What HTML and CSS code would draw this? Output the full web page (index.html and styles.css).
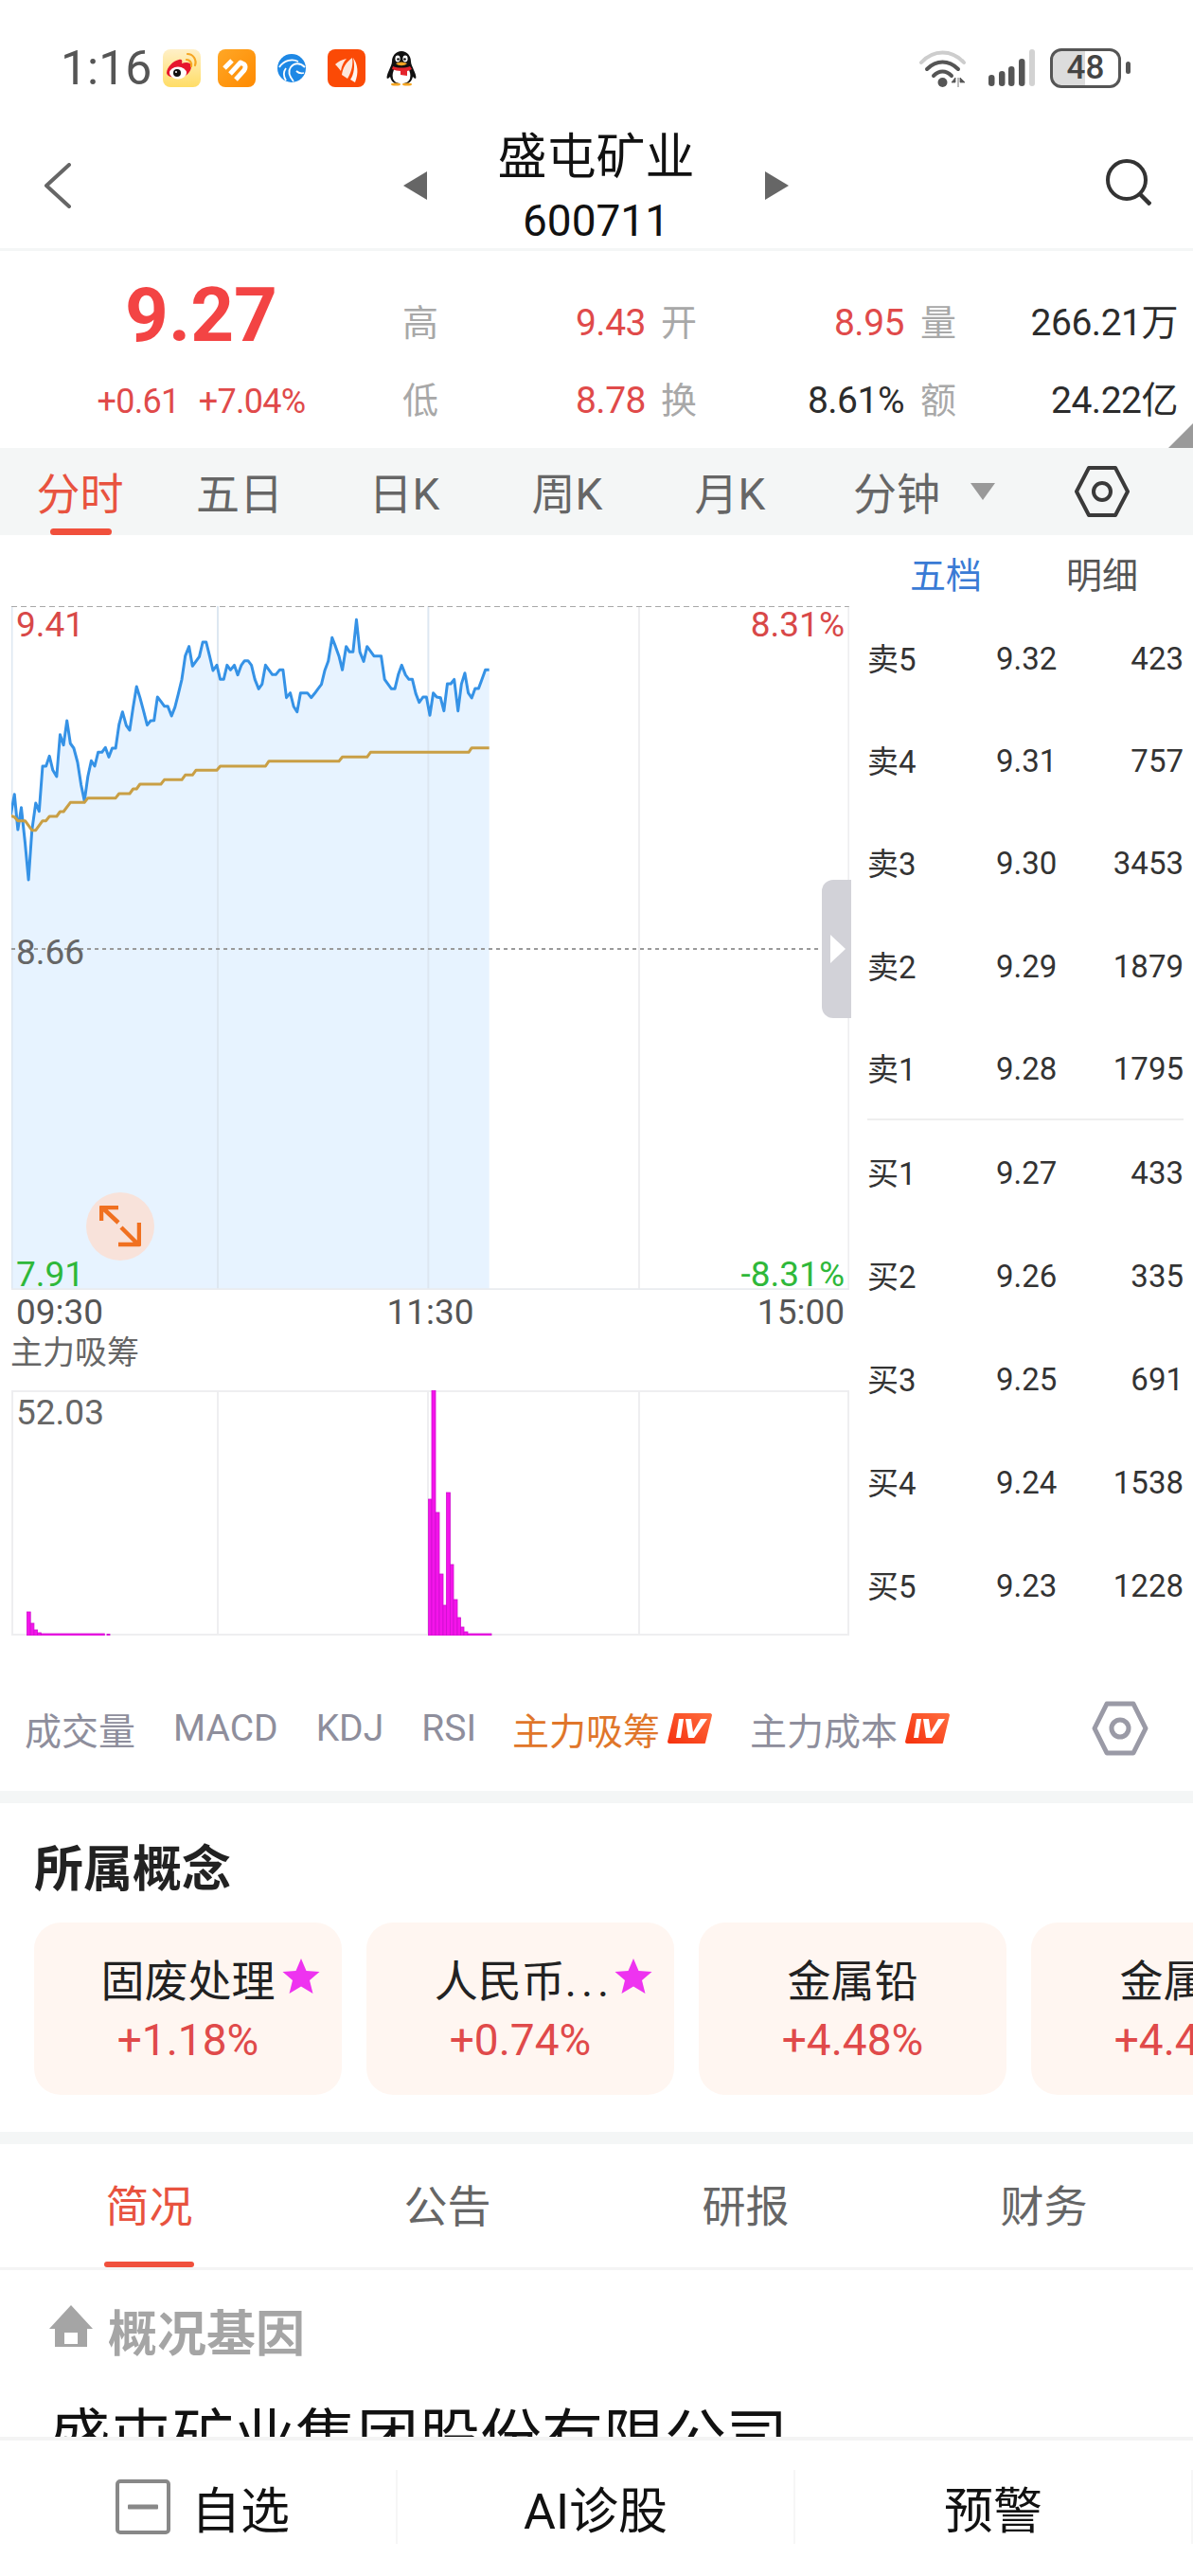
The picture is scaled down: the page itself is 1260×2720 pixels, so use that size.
FILE: index.html
```html
<!DOCTYPE html>
<html lang="zh-CN">
<head>
<meta charset="utf-8">
<title>盛屯矿业 600711</title>
<link rel="stylesheet" href="styles.css">
</head>
<body>
<div class="page">
  <div class="scroll">
    <div class="status">
      <span class="time">1:16</span>
      <div class="apps">
        <svg class="app" viewBox="0 0 40 40"><defs><linearGradient id="wb" x1="0" y1="0" x2="0" y2="1"><stop offset="0" stop-color="#fff0c8"/><stop offset="1" stop-color="#ffdd66"/></linearGradient></defs><rect width="40" height="40" rx="8" fill="url(#wb)"/><path d="M4 25c0-6 7-13 13-14 3-1 4 1 3 4 5-2 10-1 10 3 0 7-7 12-14 12-7 0-12-2-12-5z" fill="#e6162d"/><ellipse cx="16" cy="25" rx="9" ry="6.5" fill="#fff"/><circle cx="15" cy="25" r="4" fill="#111"/><circle cx="14" cy="24" r="1" fill="#fff"/><path d="M25 11c3 0 6 3 5 7M26 5c6 0 10 6 8 12" fill="none" stroke="#f6a623" stroke-width="2.2" stroke-linecap="round"/></svg>
        <svg class="app" viewBox="0 0 40 40"><defs><linearGradient id="hb" x1="0" y1="0" x2="1" y2="1"><stop offset="0" stop-color="#ffa726"/><stop offset="1" stop-color="#ff8a00"/></linearGradient></defs><rect width="40" height="40" rx="8" fill="url(#hb)"/><path d="M7 20l8-8M13 26l11-12 4 2c2 2 1 4 0 6l-9 10" fill="none" stroke="#fff" stroke-width="5" stroke-linejoin="round"/></svg>
        <svg class="app" viewBox="0 0 40 40"><circle cx="20" cy="20" r="15" fill="#1e88e5"/><path d="M7 19c5-8 14-9 20-6M34 19c-5-5-11-5-15 0-3 4-1 10 3 15M14 33c-3-5-3-9 0-13M33 25c-4 1-6 0-8-2" fill="none" stroke="#fff" stroke-width="1.8"/></svg>
        <svg class="app" viewBox="0 0 40 40"><rect width="40" height="40" rx="8" fill="#fb4a06"/><path d="M8 16c3-3 7-5 12-6-3 3-5 7-6 13-2-3-4-5-6-7z" fill="#fde7dc"/><path d="M15 27c1-7 4-13 11-18 1 6 0 14-5 22-2-1-4-3-6-4z" fill="#fde7dc"/><path d="M24 32c4-6 5-14 3-23 5 7 6 16 2 26-2-1-3-2-5-3z" fill="#fff5ef"/></svg>
        <svg class="app" viewBox="0 0 40 40"><path d="M20 2c6 0 10 5 10 11 0 3 2 6 3 9 2 4 3 8 2 9-1 0-2-1-3-2-1 4-3 6-5 7H13c-2-1-4-3-5-7-1 1-2 2-3 2-1-1 0-5 2-9 1-3 3-6 3-9C10 7 14 2 20 2z" fill="#111"/><path d="M13 20h14c2 3 3 7 2 11-1 3-4 5-9 5s-8-2-9-5c-1-4 0-8 2-11z" fill="#fff"/><path d="M11 18c5 2 13 2 18 0l2 3c-2 1-4 2-5 2v5l-7-1v-4c-3 0-6-1-9-2z" fill="#e4242c"/><ellipse cx="16" cy="10" rx="2.6" ry="3.4" fill="#fff"/><ellipse cx="24" cy="10" rx="2.6" ry="3.4" fill="#fff"/><circle cx="16.5" cy="10.5" r="1.3" fill="#111"/><circle cx="23.5" cy="10.5" r="1.3" fill="#111"/><path d="M14 15c4-2 8-2 12 0-3 3-9 3-12 0z" fill="#f5a623"/><ellipse cx="14" cy="37" rx="5" ry="1.5" fill="#f5a623"/><ellipse cx="26" cy="37" rx="5" ry="1.5" fill="#f5a623"/></svg>
      </div>
      <div class="sys">
        <svg class="wifi" viewBox="0 0 49 40"><path d="M2 14c13-14 32-14 45 0" fill="none" stroke="#cdcdcd" stroke-width="4" stroke-linecap="round"/><path d="M8 21c10-10 23-10 33 0M15 28c6-6 13-6 19 0" fill="none" stroke="#555" stroke-width="4" stroke-linecap="round"/><circle cx="24.500" cy="35" r="5" fill="#555"/><path d="M38 35l-4 0 4-5zM41 30v10M43 30l5 5-5 0z" fill="#555" stroke="#555" stroke-width=".8"/></svg>
        <svg class="signal" viewBox="0 0 49 40"><rect x="0" y="27" width="6.500" height="12" rx="3.200" fill="#555"/><rect x="11" y="23" width="6.500" height="16" rx="3.200" fill="#555"/><rect x="21" y="18" width="6.500" height="21" rx="3.200" fill="#555"/><rect x="32" y="10" width="6.500" height="29" rx="3.200" fill="#555"/><rect x="43" y="0" width="6" height="39" rx="3" fill="#d2d2d2"/></svg>
        <div class="battery">48</div>
      </div>
    </div>

    <header class="header">
      <svg class="back" viewBox="0 0 30 48"><path d="M27 2L3 24l24 22" fill="none" stroke="#666" stroke-width="4" stroke-linecap="round" stroke-linejoin="round"/></svg>
      <svg class="tri" viewBox="0 0 25 30"><path d="M25 0v30L0 15z" fill="#666"/></svg>
      <div class="title">
        <div class="name">盛屯矿业</div>
        <div class="code">600711</div>
      </div>
      <svg class="tri" viewBox="0 0 25 30"><path d="M0 0v30l25-15z" fill="#666"/></svg>
      <svg class="search" viewBox="0 0 48 50"><circle cx="22" cy="23" r="20" fill="none" stroke="#333" stroke-width="4"/><path d="M36 38l11 11" stroke="#333" stroke-width="4.500"/></svg>
    </header>

    <section class="quote">
      <div class="price-block">
        <div class="price">9.27</div>
        <div class="change"><span>+0.61</span><span>+7.04%</span></div>
      </div>
      <div class="stats">
        <span class="lab">高</span><span class="val up">9.43</span>
        <span class="lab">开</span><span class="val up">8.95</span>
        <span class="lab">量</span><span class="val">266.21万</span>
        <span class="lab">低</span><span class="val up">8.78</span>
        <span class="lab">换</span><span class="val">8.61%</span>
        <span class="lab">额</span><span class="val">24.22亿</span>
      </div>
      <div class="corner"></div>
    </section>

    <nav class="period">
      <span class="period-tab active">分时</span>
      <span class="period-tab">五日</span>
      <span class="period-tab k-day">日K</span>
      <span class="period-tab">周K</span>
      <span class="period-tab">月K</span>
      <span class="period-tab">分钟</span>
      <svg class="drop" viewBox="0 0 26 18"><path d="M0 0h26L13 18z" fill="#999"/></svg>
      <svg class="hex" viewBox="0 0 58 54"><path d="M2 27L15 2h28l13 25-13 25H15z" fill="none" stroke="#3a3a3a" stroke-width="4" stroke-linejoin="round"/><circle cx="29" cy="27" r="9" fill="none" stroke="#3a3a3a" stroke-width="4"/></svg>
    </nav>

    <section class="market">
      <div class="charts">
        <div class="price-chart">
          <svg class="chart-svg" viewBox="29.9 90 2202.7 2166" preserveAspectRatio="none">
            <polygon class="area" points="28,752 38,686 47,798 56,728 66,840 75,957 84,800 94,714 103,740 112,597 121,597 130,565 139,610 149,630 158,497 167,530 176,453 185,525 194,540 204,585 213,655 222,707 231,630 240,580 249,597 258,553 268,553 277,538 286,568 295,540 304,540 313,465 322,425 332,468 341,483 350,410 359,345 368,380 378,425 387,467 396,453 405,452 414,378 423,392 432,407 441,407 451,438 460,410 469,367 478,322 487,248 497,218 506,280 515,265 524,250 533,204 542,204 551,248 560,294 570,277 579,322 588,322 597,277 606,292 616,277 625,308 634,278 643,263 652,263 661,277 670,322 680,352 689,337 698,277 707,292 716,307 725,307 735,292 744,292 753,380 763,365 772,408 781,425 790,365 799,365 808,365 818,380 827,367 836,352 845,338 854,293 863,264 873,190 882,218 891,248 900,292 910,218 919,235 928,235 937,133 946,235 956,265 965,218 974,233 983,248 992,248 1002,248 1011,322 1020,337 1029,352 1038,352 1047,307 1056,277 1066,308 1075,322 1084,322 1093,367 1102,395 1112,378 1121,378 1130,436 1139,365 1148,378 1158,380 1167,422 1176,336 1185,336 1194,322 1204,422 1213,337 1222,302 1231,365 1240,381 1249,351 1258,351 1267,322 1276,292 1286,292 1286,2256 30,2256"/>
            <path class="grid" d="M1680 90V2256M2231 90V2256"/>
            <path class="grid-on" d="M31 90V2256M572.500 90V2256M1126 90V2256"/>
            <path class="grid-top" d="M30 91H2232"/>
            <path class="mid" d="M30 1176H2232"/>
            <path class="grid-bottom" d="M30 2255H2232"/>
            <polyline class="price-line" points="28,752 38,686 47,798 56,728 66,840 75,957 84,800 94,714 103,740 112,597 121,597 130,565 139,610 149,630 158,497 167,530 176,453 185,525 194,540 204,585 213,655 222,707 231,630 240,580 249,597 258,553 268,553 277,538 286,568 295,540 304,540 313,465 322,425 332,468 341,483 350,410 359,345 368,380 378,425 387,467 396,453 405,452 414,378 423,392 432,407 441,407 451,438 460,410 469,367 478,322 487,248 497,218 506,280 515,265 524,250 533,204 542,204 551,248 560,294 570,277 579,322 588,322 597,277 606,292 616,277 625,308 634,278 643,263 652,263 661,277 670,322 680,352 689,337 698,277 707,292 716,307 725,307 735,292 744,292 753,380 763,365 772,408 781,425 790,365 799,365 808,365 818,380 827,367 836,352 845,338 854,293 863,264 873,190 882,218 891,248 900,292 910,218 919,235 928,235 937,133 946,235 956,265 965,218 974,233 983,248 992,248 1002,248 1011,322 1020,337 1029,352 1038,352 1047,307 1056,277 1066,308 1075,322 1084,322 1093,367 1102,395 1112,378 1121,378 1130,436 1139,365 1148,378 1158,380 1167,422 1176,336 1185,336 1194,322 1204,422 1213,337 1222,302 1231,365 1240,381 1249,351 1258,351 1267,322 1276,292 1286,292"/>
            <polyline class="avg-line" points="28,754 38,758 47,770 66,770 75,785 84,800 94,800 112,770 121,770 130,756 149,756 158,741 167,741 185,712 222,712 231,698 304,698 313,684 341,684 350,669 359,669 368,654 423,654 432,640 478,640 487,625 506,625 515,610 570,610 579,597 698,597 707,581 891,581 900,568 965,568 974,553 1232,553 1240,539 1286,539"/>
          </svg>
          <span class="axis tl up">9.41</span>
          <span class="axis tr up">8.31%</span>
          <span class="axis ml">8.66</span>
          <span class="axis bl down">7.91</span>
          <span class="axis br down">-8.31%</span>
          <div class="expand">
            <svg viewBox="0 0 44 44"><path d="M2 16V2h18M4 3l16 15M42 18v23H20M41 41L23 23" fill="none" stroke="#f07020" stroke-width="4.500" stroke-linejoin="round"/></svg>
          </div>
          <div class="handle"><svg viewBox="0 0 18 30"><path d="M2 0l16 15L2 30z" fill="#fff"/></svg></div>
        </div>
        <div class="times"><span>09:30</span><span>11:30</span><span>15:00</span></div>
        <div class="ind-name">主力吸筹</div>
        <div class="lower-chart">
          <svg class="chart-svg" viewBox="12 1468 885 259">
            <path class="grid" d="M13 1468V1727M230 1468V1727M452 1468V1727M675 1468V1727M896 1468V1727M12 1469H897M12 1726H897"/>
            <g class="bars">
              <rect x="28.500" y="1702" width="3.700" height="25"/><rect x="32.200" y="1714" width="3.700" height="13"/><rect x="35.900" y="1721" width="3.700" height="6"/><rect x="39.600" y="1724" width="3.700" height="3"/><rect x="43.300" y="1725" width="67" height="2"/><rect x="113" y="1725.500" width="3" height="1.500"/>
              <rect x="452.500" y="1583" width="3.500" height="144"/><rect x="456" y="1468" width="4" height="259"/><rect x="460" y="1597" width="4" height="130"/><rect x="464" y="1662" width="4" height="65"/><rect x="468" y="1695" width="3.500" height="32"/><rect x="471.500" y="1576" width="4" height="151"/><rect x="475.500" y="1652" width="3.500" height="75"/><rect x="479" y="1689" width="4" height="38"/><rect x="483" y="1708" width="3.500" height="19"/><rect x="486.500" y="1718" width="3.500" height="9"/><rect x="490" y="1723" width="4" height="4"/><rect x="494" y="1725" width="25" height="2"/>
            </g>
          </svg>
          <span class="axis tl small">52.03</span>
        </div>
      </div>
      <aside class="book">
        <div class="book-tabs"><span class="on">五档</span><span>明细</span></div>
        <div class="sell">
          <div class="row"><span class="r-lab">卖5</span><span>9.32</span><span class="vol">423</span></div>
          <div class="row"><span class="r-lab">卖4</span><span>9.31</span><span class="vol">757</span></div>
          <div class="row"><span class="r-lab">卖3</span><span>9.30</span><span class="vol">3453</span></div>
          <div class="row"><span class="r-lab">卖2</span><span>9.29</span><span class="vol">1879</span></div>
          <div class="row"><span class="r-lab">卖1</span><span>9.28</span><span class="vol">1795</span></div>
        </div>
        <div class="buy">
          <div class="row"><span class="r-lab">买1</span><span>9.27</span><span class="vol">433</span></div>
          <div class="row"><span class="r-lab">买2</span><span>9.26</span><span class="vol">335</span></div>
          <div class="row"><span class="r-lab">买3</span><span>9.25</span><span class="vol">691</span></div>
          <div class="row"><span class="r-lab">买4</span><span>9.24</span><span class="vol">1538</span></div>
          <div class="row"><span class="r-lab">买5</span><span>9.23</span><span class="vol">1228</span></div>
        </div>
      </aside>
    </section>

    <nav class="indicators">
      <span class="ind w-a">成交量</span>
      <span class="ind w-b">MACD</span>
      <span class="ind w-c">KDJ</span>
      <span class="ind w-d">RSI</span>
      <span class="ind hot w-e">主力吸筹</span>
      <svg class="vip" viewBox="0 0 47 34"><defs><linearGradient id="v1" x1="0" y1="1" x2="1" y2="0"><stop offset="0" stop-color="#f5300c"/><stop offset="1" stop-color="#ff6d3f"/></linearGradient></defs><path d="M9 1h36c1 0 2 1 2 2l-7 29c0 1-1 1-2 1H2c-1 0-2-1-2-2L7 2c0-1 1-1 2-1z" fill="url(#v1)"/><path d="M12 7l-3 20h5l3-20zM19 7h6l2 14 8-14h7L28 27h-6z" fill="#fff"/></svg>
      <span class="ind w-f">主力成本</span>
      <svg class="vip" viewBox="0 0 47 34"><path d="M9 1h36c1 0 2 1 2 2l-7 29c0 1-1 1-2 1H2c-1 0-2-1-2-2L7 2c0-1 1-1 2-1z" fill="url(#v1)"/><path d="M12 7l-3 20h5l3-20zM19 7h6l2 14 8-14h7L28 27h-6z" fill="#fff"/></svg>
      <svg class="hex2" viewBox="0 0 60 58"><path d="M3 29L16 3h28l13 26-13 26H16z" fill="none" stroke="#9a9aa6" stroke-width="5" stroke-linejoin="round"/><circle cx="30" cy="29" r="9" fill="none" stroke="#9a9aa6" stroke-width="5"/></svg>
    </nav>

    <div class="band"></div>

    <section class="concepts">
      <h2 class="concepts-title">所属概念</h2>
      <div class="cards">
        <div class="card"><div class="c-name">固废处理</div><div class="c-val">+1.18%</div><svg class="star" viewBox="0 0 40 40"><path d="M20 1l5.500 13 14 1-10.500 9 3.500 14L20 30.500 7.500 38l3.500-14L.5 15l14-1z" fill="#ee33f0"/></svg></div>
        <div class="card"><div class="c-name">人民币<span class="dots">...</span></div><div class="c-val">+0.74%</div><svg class="star" viewBox="0 0 40 40"><path d="M20 1l5.500 13 14 1-10.500 9 3.500 14L20 30.500 7.500 38l3.500-14L.5 15l14-1z" fill="#ee33f0"/></svg></div>
        <div class="card"><div class="c-name">金属铅</div><div class="c-val">+4.48%</div></div>
        <div class="card"><div class="c-name">金属锌</div><div class="c-val">+4.48%</div></div>
      </div>
    </section>

    <div class="band"></div>

    <nav class="ftabs">
      <span class="ftab active">简况</span>
      <span class="ftab">公告</span>
      <span class="ftab">研报</span>
      <span class="ftab">财务</span>
    </nav>

    <div class="gene">
      <svg class="home" viewBox="0 0 46 44"><path fill-rule="evenodd" d="M23 0l23 25h-6v19H6V25H0zM16 29v12h14V29z" fill="#a5a5a5"/></svg>
      <span>概况基因</span>
    </div>
    <div class="company">盛屯矿业集团股份有限公司</div>
  </div>

  <footer class="bottom">
    <div class="bcell first">
      <svg class="minus" viewBox="0 0 58 58"><rect x="2" y="2" width="54" height="54" rx="3" fill="none" stroke="#888" stroke-width="4"/><rect x="13" y="26.500" width="32" height="5" rx="1" fill="#888"/></svg>
      <span>自选</span>
    </div>
    <div class="bcell">AI诊股</div>
    <div class="bcell">预警</div>
  </footer>
</div>
</body>
</html>
```

FILE: styles.css
```css
* { box-sizing: border-box; }
html, body { margin: 0; padding: 0; background: #fff; }
body { font-family: Roboto, "Noto Sans CJK SC", sans-serif; color: #222; }
.page { width: 1260px; height: 2720px; display: flex; flex-direction: column; overflow: hidden; }
.scroll { flex: 1; min-height: 0; overflow: hidden; }

.status { height: 130px; padding: 52px 68px 0 64px; display: flex; align-items: flex-start; }
.time { font-size: 50px; line-height: 40px; color: #555; width: 108px; }
.apps { display: flex; gap: 18px; }
.app { width: 40px; height: 40px; display: block; }
.sys { margin-left: auto; display: flex; align-items: center; height: 40px; }
.wifi, .signal { width: 49px; height: 40px; display: block; }
.signal { margin-left: 24px; }
.battery { margin-left: 16px; margin-right: 8px; position: relative; width: 75px; height: 42px; border: 3.5px solid #555; border-radius: 12px; background: linear-gradient(90deg, #dcdcdc 50%, #fff 50%); color: #444; font-size: 35px; font-weight: 500; line-height: 35px; text-align: center; }
.battery::after { content: ""; position: absolute; right: -13px; top: 11px; width: 5px; height: 13px; border-radius: 3px; background: #555; }

.header { height: 135px; border-bottom: 3px solid #f4f6f6; display: flex; align-items: center; position: relative; padding-left: 46px; padding-right: 44px; }
.back { width: 30px; height: 48px; margin-right: 350px; display: block; }
.tri { width: 25px; height: 30px; display: block; }
.title { width: 357px; text-align: center; color: #111; padding-top: 6px; }
.name { font-size: 52px; line-height: 68px; }
.code { font-size: 46px; line-height: 64px; }
.search { width: 48px; height: 50px; margin-left: auto; margin-bottom: 8px; display: block; }

.quote { height: 208px; display: flex; position: relative; padding-top: 35px; }
.price-block { width: 407px; padding: 2px 0 0 18px; text-align: center; }
.price { font-size: 80px; font-weight: 700; line-height: 62px; color: #f34444; }
.change { margin-top: 33px; font-size: 36px; line-height: 54px; color: #e04a4a; display: flex; justify-content: center; gap: 20px; letter-spacing: -.7px; }
.stats { display: grid; grid-template-columns: 56px 217px 56px 217px 57px 232px; grid-auto-rows: 82px; align-items: center; }
.lab { font-size: 38px; color: #a8a8a8; justify-self: end; line-height: 1; }
.val { font-size: 39px; letter-spacing: -.5px; color: #2c2c2c; justify-self: end; line-height: 1; margin-right: -2px; }
.up { color: #e04a4a; }
.down { color: #2fb83a; }
.corner { position: absolute; right: 0; bottom: 0; width: 26px; height: 26px; background: #9a9a9a; clip-path: polygon(100% 0, 100% 100%, 0 100%); }

.period { height: 92px; background: #f4f6f6; display: grid; grid-template-columns: 169px 168px 188px 148px 196px 156px 26px 84px 58px; align-items: center; }
.period-tab { font-size: 46px; height: 92px; line-height: 98px; color: #666; text-align: center; position: relative; }
.period-tab.active { color: #e8533f; }
.period-tab.active::after { content: ""; position: absolute; left: 50%; margin-left: -32px; bottom: 0; width: 65px; height: 7px; border-radius: 4px; background: #f0503c; }
.k-day { padding-right: 8px; }
.drop { width: 26px; height: 18px; display: block; }
.hex { width: 58px; height: 54px; display: block; grid-column: 9; }

.market { height: 1199px; display: flex; }
.charts { width: 885px; margin-left: 12px; padding-top: 75px; flex: none; }
.price-chart { height: 722px; position: relative; }
.chart-svg { width: 100%; height: 100%; display: block; }
.area { fill: #e7f3ff; }
.grid { fill: none; stroke: #eeeef0; stroke-width: 2; vector-effect: non-scaling-stroke; }
.grid-on { fill: none; stroke: #dde7f1; stroke-width: 2; vector-effect: non-scaling-stroke; }
.grid-top { stroke: #a8a8a8; stroke-width: 1.5; stroke-dasharray: 6 4; vector-effect: non-scaling-stroke; }
.mid { stroke: #999; stroke-width: 2; stroke-dasharray: 4 4; vector-effect: non-scaling-stroke; }
.grid-bottom { stroke: #e9ebef; stroke-width: 3; vector-effect: non-scaling-stroke; }
.price-line { fill: none; stroke: #3592e6; stroke-width: 3; vector-effect: non-scaling-stroke; stroke-linejoin: round; }
.avg-line { fill: none; stroke: #c99f45; stroke-width: 3; vector-effect: non-scaling-stroke; stroke-linejoin: round; }
.axis { position: absolute; font-size: 37px; line-height: 36px; color: #666; }
.axis.up { color: #d84848; }
.axis.down { color: #2fb83a; }
.tl { left: 5px; top: 2px; }
.tr { right: 5px; top: 2px; }
.ml { left: 5px; top: 348px; }
.bl { left: 5px; top: 688px; }
.br { right: 5px; top: 688px; }
.expand { position: absolute; left: 79px; top: 619px; width: 72px; height: 72px; border-radius: 50%; background: #f8e2da; display: flex; align-items: center; justify-content: center; }
.expand svg { width: 44px; height: 44px; display: block; }
.handle { position: absolute; left: 856px; top: 289px; width: 31px; height: 146px; background: #d2d2d8; border-radius: 12px 0 0 12px; display: flex; align-items: center; justify-content: center; }
.handle svg { width: 18px; height: 30px; display: block; }

.times { height: 50px; display: flex; justify-content: space-between; padding: 0 5px 0 5px; font-size: 37px; line-height: 48px; color: #555; }
.ind-name { height: 56px; font-size: 34px; line-height: 32px; color: #666; margin-left: -1px; }
.lower-chart { height: 259px; position: relative; }
.lower-chart .axis.small { left: 5px; top: 6px; }
.bars rect { fill: #f414ea; stroke: #cf10cf; stroke-width: .8; }

.book { width: 334px; margin-left: 19px; flex: none; color: #333; }
.book-tabs { height: 75px; padding: 13px 0 0 45px; display: flex; gap: 89px; font-size: 38px; line-height: 60px; color: #555; }
.book-tabs .on { color: #3a7bd5; }
.sell { height: 543px; border-bottom: 2px solid #eee; }
.sell .row { height: 108.2px; }
.buy { margin-top: -1px; }
.row { height: 109px; padding-top: 3px; display: flex; align-items: center; font-size: 33px; color: #333; }
.r-lab { width: 136px; margin-bottom: 3px; }
.vol { margin-left: auto; }

.indicators { height: 127px; padding-bottom: 5px; display: flex; align-items: center; }
.ind { font-size: 39px; color: #8e8e9c; flex: none; }
.hot { color: #e0762a; }
.w-a { margin-left: 26px; }
.w-b { margin-left: 40px; }
.w-c { margin-left: 40px; }
.w-d { margin-left: 40px; }
.w-e { margin-left: 38px; }
.vip { width: 47px; height: 34px; display: block; margin-left: 8px; flex: none; }
.w-f { margin-left: 40px; }
.hex2 { width: 60px; height: 58px; display: block; margin-left: 150px; flex: none; }

.band { height: 13px; background: #f4f6f6; }

.concepts { height: 347px; padding: 36px 0 0 36px; overflow: hidden; }
.concepts-title { margin: 0 0 20px; font-size: 52px; line-height: 70px; font-weight: 700; color: #222; }
.cards { display: flex; gap: 26px; width: 1400px; }
.card { width: 325px; height: 182px; flex: none; border-radius: 28px; background: #fff6f1; text-align: center; position: relative; padding-top: 31px; }
.c-name { font-size: 46px; line-height: 62px; color: #222; }
.dots { letter-spacing: 5px; margin-right: -8px; }
.c-val { font-size: 46px; line-height: 58px; color: #e04a4a; margin-top: 2px; }
.star { position: absolute; left: 262px; top: 37px; width: 40px; height: 40px; display: block; }

.ftabs { height: 133px; border-bottom: 3px solid #f4f4f4; display: grid; grid-template-columns: repeat(4, 1fr); }
.ftab { font-size: 46px; line-height: 132px; text-align: center; color: #666; position: relative; height: 130px; }
.ftab.active { color: #e8533f; }
.ftab.active::after { content: ""; position: absolute; left: 110px; bottom: 0; width: 95px; height: 6px; border-radius: 3px; background: #f0503c; }

.gene { margin-top: 33px; height: 60px; display: flex; align-items: center; padding-left: 52px; gap: 16px; font-size: 52px; font-weight: 700; color: #a5a5a5; }
.home { width: 46px; height: 44px; display: block; margin-top: -8px; }
.company { margin-top: 45px; padding-left: 52px; font-size: 65px; line-height: 80px; color: #111; white-space: nowrap; }

.bottom { height: 147px; flex: none; border-top: 4px solid #f4f4f4; display: flex; padding: 31px 0 34px; background: #fff; }
.bcell { width: 420px; flex: none; display: flex; align-items: center; justify-content: center; gap: 22px; font-size: 52px; color: #111; border-right: 2px solid #f6f6f6; }
.bcell.first { padding-left: 10px; }
.minus { width: 58px; height: 58px; display: block; }
```
